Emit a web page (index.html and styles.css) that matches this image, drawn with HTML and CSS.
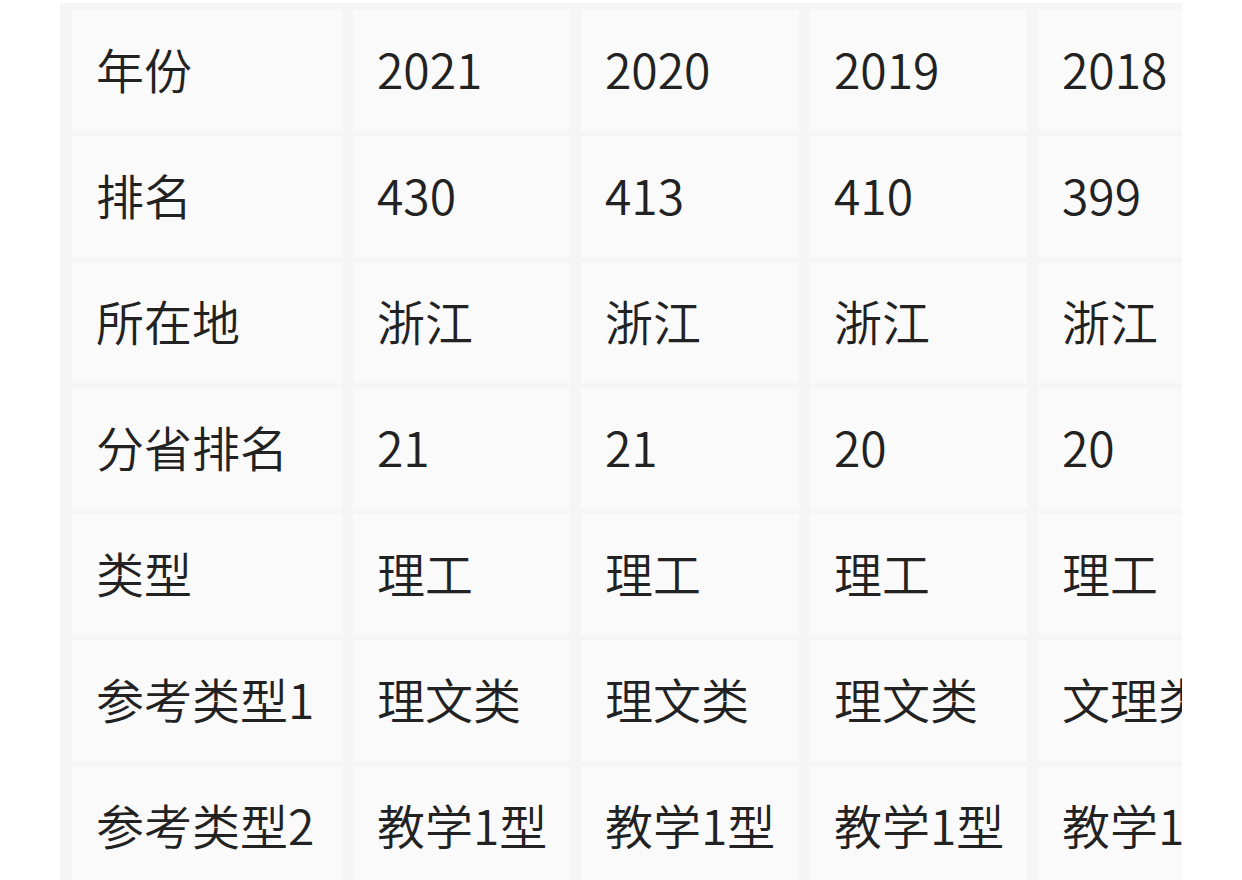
FILE: index.html
```html
<!DOCTYPE html>
<html lang="zh-CN">
<head>
<meta charset="utf-8">
<title>排名</title>
<link rel="stylesheet" href="styles.css">
</head>
<body>
<div class="wrap">
  <div class="grid">
    <div class="cell">年份</div><div class="cell">2021</div><div class="cell">2020</div><div class="cell">2019</div><div class="cell">2018</div>
    <div class="cell">排名</div><div class="cell">430</div><div class="cell">413</div><div class="cell">410</div><div class="cell">399</div>
    <div class="cell">所在地</div><div class="cell">浙江</div><div class="cell">浙江</div><div class="cell">浙江</div><div class="cell">浙江</div>
    <div class="cell">分省排名</div><div class="cell">21</div><div class="cell">21</div><div class="cell">20</div><div class="cell">20</div>
    <div class="cell">类型</div><div class="cell">理工</div><div class="cell">理工</div><div class="cell">理工</div><div class="cell">理工</div>
    <div class="cell">参考类型1</div><div class="cell">理文类</div><div class="cell">理文类</div><div class="cell">理文类</div><div class="cell">文理类</div>
    <div class="cell">参考类型2</div><div class="cell">教学1型</div><div class="cell">教学1型</div><div class="cell">教学1型</div><div class="cell">教学1型</div>
  </div>
</div>
</body>
</html>
```
FILE: styles.css
```css
html, body {
  margin: 0;
  padding: 0;
  background: #ffffff;
}
body {
  font-family: "Noto Sans CJK SC", "Noto Sans", sans-serif;
  color: #222222;
  height: 880px;
  overflow: hidden;
}
.wrap {
  margin: 3px 0 0 60px;
  width: 1122px;
  height: 877px;
  background: #f5f5f5;
  overflow: hidden;
  box-sizing: border-box;
  padding: 7px 0 0 12px;
}
.grid {
  display: grid;
  grid-template-columns: 270px 217px 218px 217px 217px;
  grid-auto-rows: 121px;
  column-gap: 11px;
  row-gap: 5px;
}
.cell {
  background: #fafafa;
  display: flex;
  align-items: center;
  box-sizing: border-box;
  padding: 0 0 6px 24px;
  font-size: 48px;
  font-weight: 350;
  line-height: 1;
  white-space: nowrap;
  overflow: hidden;
}
```
